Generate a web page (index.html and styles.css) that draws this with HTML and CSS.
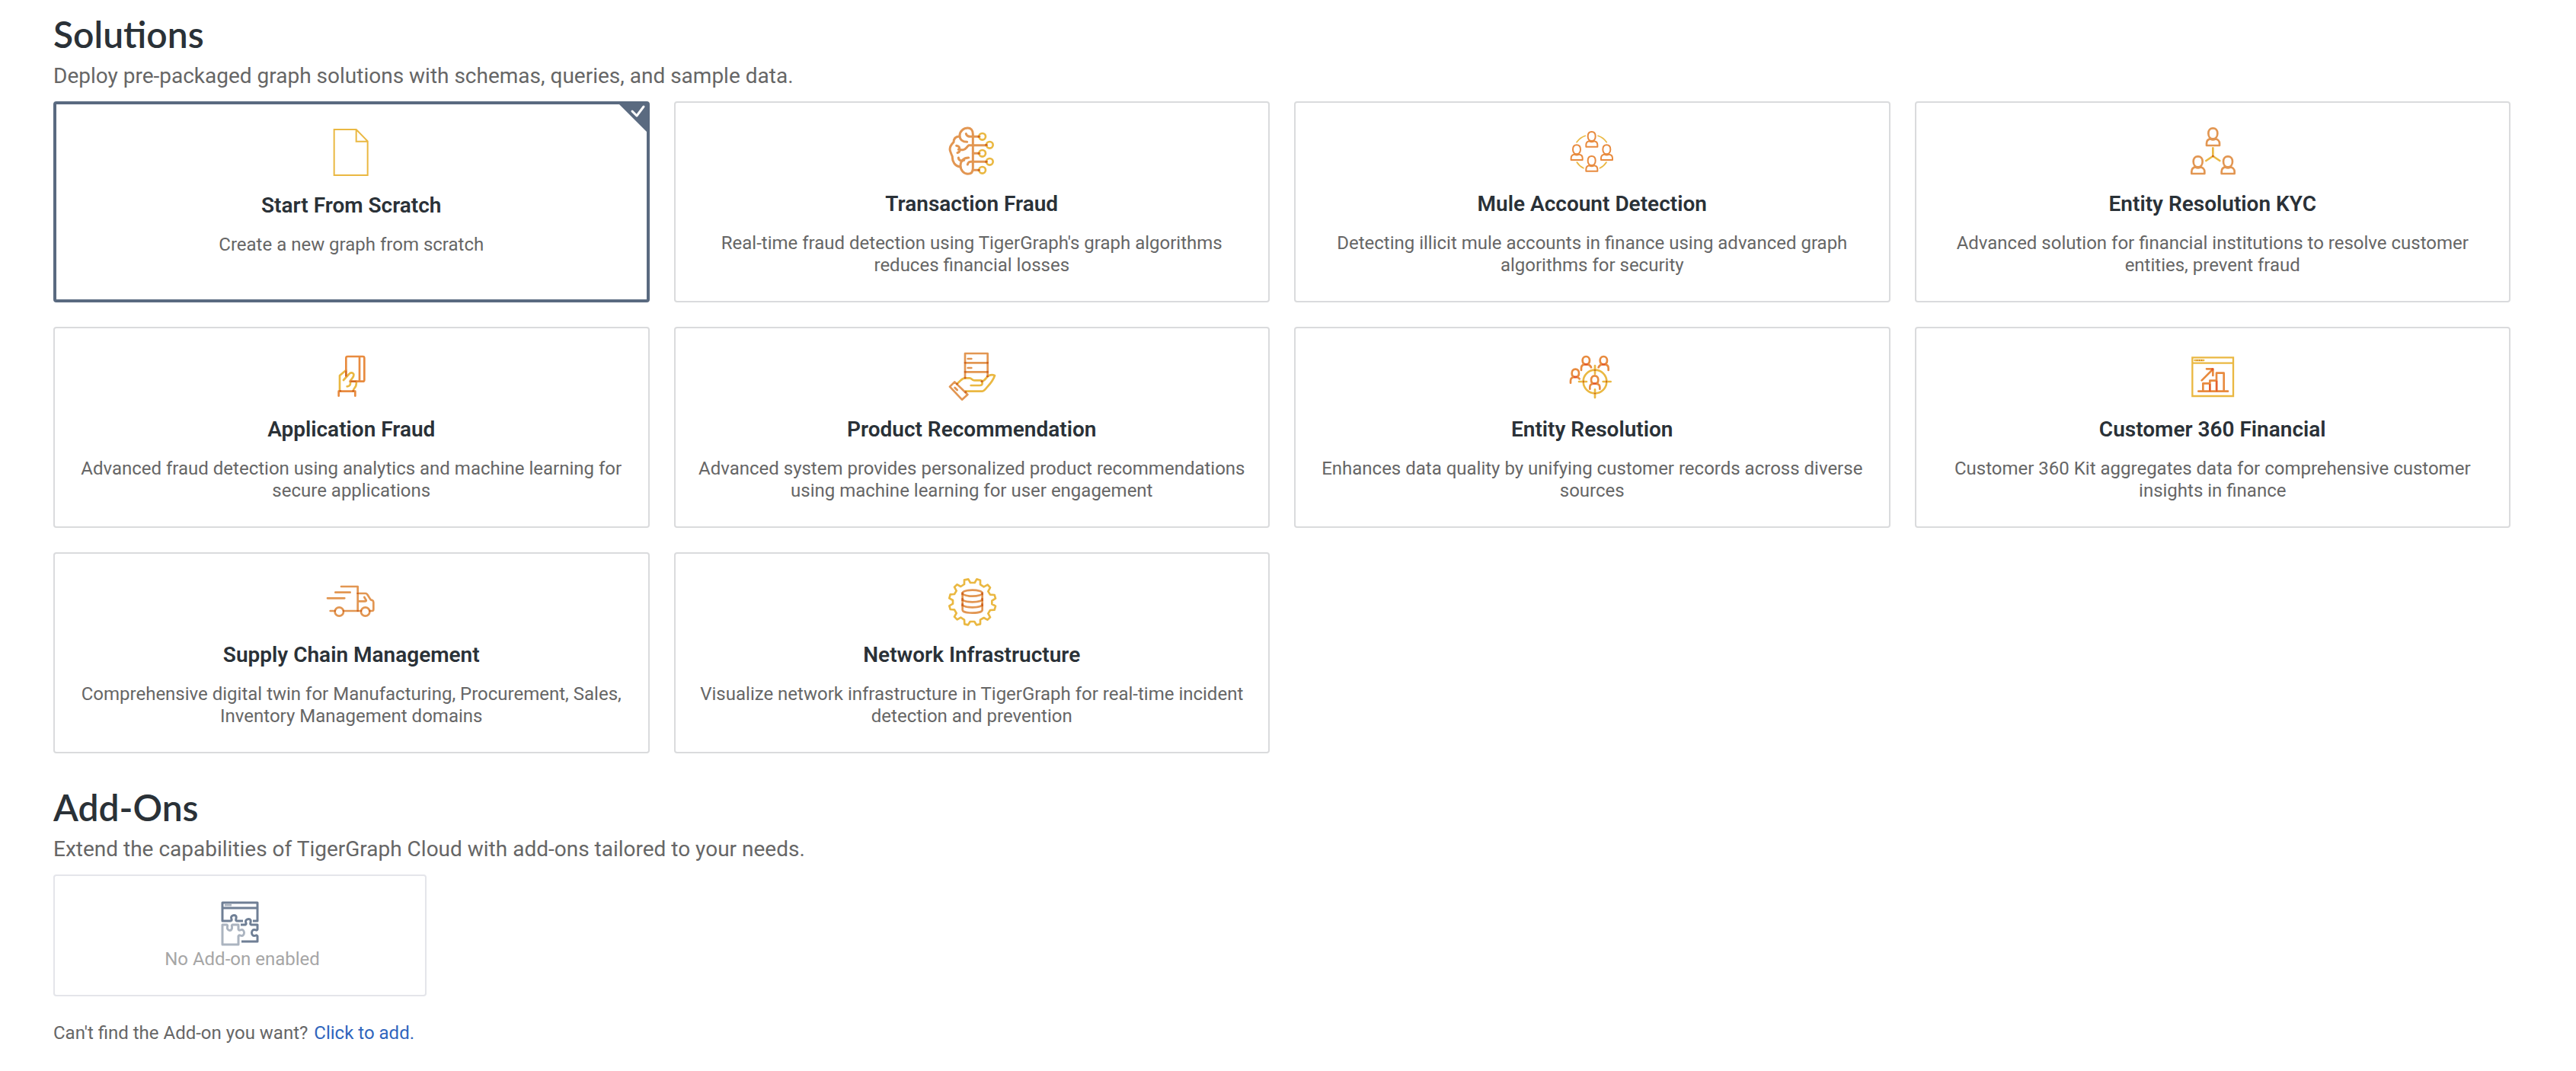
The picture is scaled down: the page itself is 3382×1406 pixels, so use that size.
FILE: index.html
```html
<!DOCTYPE html>
<html lang="en">
<head>
<meta charset="utf-8">
<meta name="viewport" content="width=device-width, initial-scale=1">
<title>Solutions and Add-Ons</title>
<link rel="stylesheet" href="styles.css">
</head>
<body>
<main class="page">
  <section class="section">
    <h1 class="heading">Solutions</h1>
    <p class="lead">Deploy pre-packaged graph solutions with schemas, queries, and sample data.</p>
    <div class="solutions">
      <button type="button" class="card card-selected" aria-pressed="true">
        <svg class="icon" viewBox="88 87 192 192" aria-hidden="true"><path class="y miter" stroke-width="6" d="M117 90h87l45 46v134H117zM204 92v45h44"/></svg>
        <span class="card-title">Start From Scratch</span>
        <span class="card-text">Create a new graph from scratch</span>
        <svg class="corner" viewBox="0 0 36 36" aria-hidden="true"><path class="corner-fill" d="M0 0h36v36z"/><path class="corner-check" d="M17 9l6 6 9-12"/></svg>
      </button>
      <button type="button" class="card" aria-pressed="false">
        <svg class="icon" viewBox="71 51 192 192" aria-hidden="true">
          <g class="o" stroke-width="9"><path d="M171 130V78c0-16-9-24-20-24-17 0-32 13-32 30 0 16 11 25 29 25M118 87c-15 1-23 10-23 23-12 12-18 24-13 36 3 8 3 10 8 20-1 22 11 39 31 42M154 171c-20 0-32 14-32 31 0 20 14 33 29 33 13 0 20-9 20-23v-79"/><path d="M144 77c3 8 9 11 17 11h36M226 122h-71c-12 10-12 18-23 18-8 0-12-1-18-1 6-4 6-12-8-15M120 139c0 7-3 11-10 13M171 154h26M226 187h-63c-7 0-12 4-13 11M176 220h20M114 171c1 11 11 14 22 10"/></g>
          <g class="y" stroke-width="8"><circle cx="208" cy="88" r="13"/><circle cx="237" cy="121" r="13"/><circle cx="208" cy="154" r="13"/><circle cx="237" cy="187" r="13"/><circle cx="208" cy="220" r="13"/></g>
          <path class="r" stroke-width="8" d="M190 88h8M219 121h8M190 154h8M219 187h8M190 220h8"/>
        </svg>
        <span class="card-title">Transaction Fraud</span>
        <span class="card-text">Real-time fraud detection using TigerGraph's graph algorithms reduces financial losses</span>
      </button>
      <button type="button" class="card" aria-pressed="false">
        <svg class="icon" viewBox="85 51 192 192" aria-hidden="true">
          <g class="o2" stroke-width="6">
            <path id="member" d="M180 69c-9 0-15 7-15 18 0 10 6 18 15 18s15-8 15-18c0-11-6-18-15-18zM158 128v-7c0-9 6-14 12-15 6 3 14 3 20 0 7 1 13 6 13 15v7z"/>
            <use href="#member" x="-59" y="52"/><use href="#member" x="59" y="52"/><use href="#member" y="96"/>
          </g>
          <path class="y" stroke-width="5" d="M121 110q13-18 34-25M205 85q21 7 34 25M122 189q9 15 26 23M238 189q-9 15-26 23"/>
        </svg>
        <span class="card-title">Mule Account Detection</span>
        <span class="card-text">Detecting illicit mule accounts in finance using advanced graph algorithms for security</span>
      </button>
      <button type="button" class="card" aria-pressed="false">
        <svg class="icon" viewBox="68 51 192 192" aria-hidden="true">
          <g class="o" stroke-width="8">
            <path id="person" d="M165 55c-11 0-18 8-18 20 0 13 7 22 18 22s18-9 18-22c0-12-7-20-18-20zM140 123v-8c0-11 7-17 15-18 6 4 14 4 20 0 8 1 16 7 16 18v8z"/>
            <use href="#person" x="-59" y="111"/><use href="#person" x="59" y="111"/>
          </g>
          <path class="y" stroke-width="8" d="M165 133v32l-27 18M165 165l27 18"/><circle class="dot" cx="165" cy="165" r="4"/>
        </svg>
        <span class="card-title">Entity Resolution KYC</span>
        <span class="card-text">Advanced solution for financial institutions to resolve customer entities, prevent fraud</span>
      </button>
      <button type="button" class="card" aria-pressed="false">
        <svg class="icon" viewBox="58 39 192 192" aria-hidden="true">
          <path class="y" stroke-width="8" d="M134 108l-25 21v60M124 147l22-24c5-6 13-7 17-1 4 7-1 13-5 18-6 9-9 8-7 15 1 10-3 17-13 17M174 152c2 13-1 21-7 27-4 4-4 5-4 10"/>
          <path class="o2" stroke-width="8" d="M134 132V60c0-4 3-6 6-6h60c4 0 6 2 6 6v86c0 4-2 6-6 6h-50M187 54v98M105 209v-18h65v18"/>
          <path class="r" stroke-width="6" d="M134 110v22M152 152h22M107 190h8M158 190h8"/>
        </svg>
        <span class="card-title">Application Fraud</span>
        <span class="card-text">Advanced fraud detection using analytics and machine learning for secure applications</span>
      </button>
      <button type="button" class="card" aria-pressed="false">
        <svg class="icon" viewBox="71 39 192 192" aria-hidden="true">
          <path class="y" stroke-width="8" d="M108 162l16-15c7-8 12-8 20-8h14c8 0 9 9 19 9h24c5 0 7 3 7 7v4c0 6-4 9-10 9h-35M205 153c12-3 17-12 23-20 8-6 20-8 29-4-7 22-21 36-33 49-7 8-11 13-17 13h-66"/>
          <path class="o" stroke-width="8" d="M140 138V42h89v90M140 79h89M140 115h89M151 63h14M151 99h14M80 173l19-19 51 50-22 20zM100 177l9 9"/>
          <path class="r" stroke-width="8" stroke-linecap="round" d="M140 79h1M228 79h1M140 115h1M228 115h1M140 138h1M228 132h1M206 152h1M108 162h1M142 194h1"/>
        </svg>
        <span class="card-title">Product Recommendation</span>
        <span class="card-text">Advanced system provides personalized product recommendations using machine learning for user engagement</span>
      </button>
      <button type="button" class="card" aria-pressed="false">
        <svg class="icon" viewBox="55 39 192 192" aria-hidden="true">
          <g class="y" stroke-width="8"><circle cx="163" cy="153" r="46"/><path d="M163 90v32M163 184v32M100 153h30M195 153h30"/></g>
          <g class="o2" stroke-width="8">
            <path id="head" d="M128 54c-9 0-14 7-14 16s5 15 14 15 14-6 14-15-5-16-14-16z"/>
            <use href="#head" x="69"/><use href="#head" x="-42" y="50"/><use href="#head" x="34" y="76"/>
            <path d="M109 108v-8c0-10 6-14 13-15h12c5 1 11 4 14 12M216 108v-8c0-10-6-14-13-15h-12c-5 1-11 4-14 12M67 158v-8c0-10 6-14 13-15h12c4 1 8 3 10 7M143 182v-7c0-9 6-13 13-14h12c7 1 14 5 14 14v7"/>
          </g>
          <path class="hot" stroke-width="7" d="M121 85h14M190 85h14M79 135h14M155 161h14"/>
          <path class="r" stroke-width="7" d="M115 153h5M206 153h5M163 105v5M163 197v5"/>
        </svg>
        <span class="card-title">Entity Resolution</span>
        <span class="card-text">Enhances data quality by unifying customer records across diverse sources</span>
      </button>
      <button type="button" class="card" aria-pressed="false">
        <svg class="icon" viewBox="68 39 192 192" aria-hidden="true">
          <path class="y miter" stroke-width="7" d="M84 58h161v152H84zM84 80h161M93 69h36"/>
          <path class="r" stroke-width="5" d="M101 69h3M110 69h3M119 69h3"/>
          <path class="o2" stroke-width="8" d="M108 191h116M126 191v-31h27v31M153 160v-11h26v42M179 149v-30h29v72M121 148l43-43M140 103h25v26"/>
          <path class="hot" stroke-width="6" d="M153 162v29M180 149v42"/><circle class="hot-dot" cx="163" cy="105" r="5"/>
        </svg>
        <span class="card-title">Customer 360 Financial</span>
        <span class="card-text">Customer 360 Kit aggregates data for comprehensive customer insights in finance</span>
      </button>
      <button type="button" class="card" aria-pressed="false">
        <svg class="icon" viewBox="58 27 192 192" aria-hidden="true">
          <g class="o" stroke-width="8"><path d="M115 60h65v96M92 83h58M61 106h67M72 156h17M125 156h67M180 87h31c4 0 5 2 8 6l10 16c2 4 4 4 8 5 4 2 5 4 5 8v28c0 4-3 6-6 6h-8M206 102l7 12c1 3 0 4-3 4h-25"/><circle cx="107" cy="159" r="17"/><circle cx="210" cy="159" r="17"/></g>
          <path class="r" stroke-width="7" d="M180 84v6M180 153v6M88 156h5M121 156h5M191 156h5M225 156h5"/>
        </svg>
        <span class="card-title">Supply Chain Management</span>
        <span class="card-text">Comprehensive digital twin for Manufacturing, Procurement, Sales, Inventory Management domains</span>
      </button>
      <button type="button" class="card" aria-pressed="false">
        <svg class="icon" viewBox="71 57 192 192" aria-hidden="true">
          <path class="y" stroke-width="8" d="M153 61l8 14h17l8-14 14 4v17l14 9 15-8 10 11-8 15 8 13 17 1 4 14-14 9v13l14 8-4 15-17 1-8 13 8 15-11 10-14-8-14 8v17l-15 3-8-13h-17l-8 13-14-3-1-17-14-9-14 8-11-11 8-14-8-14-16-1-4-14 14-8v-14l-14-8 4-15 16-1 8-13-8-15 11-10 14 8 14-9v-17z"/>
          <g class="o" stroke-width="8"><ellipse cx="169" cy="116" rx="39" ry="12"/><path d="M130 116v66c0 7 17 12 39 12s39-5 39-12v-66M130 139c0 8 17 12 39 12s39-4 39-12M130 160c0 8 17 12 39 12s39-4 39-12"/></g>
          <path class="r" stroke-width="8" d="M130 113v11M208 113v11M130 136v11M208 136v11M130 157v11M208 157v11"/>
        </svg>
        <span class="card-title">Network Infrastructure</span>
        <span class="card-text">Visualize network infrastructure in TigerGraph for real-time incident detection and prevention</span>
      </button>
    </div>
  </section>
  <section class="section">
    <h1 class="heading">Add-Ons</h1>
    <p class="lead">Extend the capabilities of TigerGraph Cloud with add-ons tailored to your needs.</p>
    <div class="empty">
      <svg class="icon" viewBox="0 0 64 64" aria-hidden="true">
        <path class="slate" d="M20 28H9V4h46v24h-6M9 11h46M20 28c3-1-1-4 1-6 2-2 5-2 6 0 1 3-2 5 1 6h8M33 33h6c3-1-1-4 1-6 2-2 5-2 6 0 1 3-2 5 1 6h8v6c-1 3-3-1-6 1-2 2-2 5 0 7 3 2 5-2 6 1v7H34"/>
        <path class="slate-light" d="M9 33h6c2 1-1 4 1 6 2 2 4 2 5 0 2-2-1-5 1-6h8v6c1 3 4-1 6 1 2 2 2 5 0 7-2 2-5-2-6 1v11H9zM12 7h9"/>
      </svg>
      <p class="empty-text">&nbsp;No Add-on enabled</p>
    </div>
    <p class="hint">Can't find the Add-on you want? <a class="link" href="#add">Click to add.</a></p>
  </section>
</main>
</body>
</html>
```
FILE: styles.css
```css
* {
  box-sizing: border-box;
}

body {
  margin: 0;
  background: #fff;
  color: #666;
  font-family: Roboto, "Liberation Sans", sans-serif;
  font-size: 24px;
  line-height: 29px;
}

.page {
  display: flex;
  flex-direction: column;
  gap: 43px;
  padding: 17px 86px 32px 70px;
}

.heading {
  margin: 0 0 6px;
  color: #2a3137;
  font-family: Lato, "Open Sans", sans-serif;
  font-size: 48px;
  font-weight: 600;
  line-height: 56px;
}

.lead {
  margin: 0 0 12px;
  font-size: 28px;
  line-height: 42px;
}

.solutions {
  display: grid;
  grid-template-columns: repeat(4, minmax(0, 1fr));
  gap: 32px;
}

.card {
  position: relative;
  display: flex;
  flex-direction: column;
  align-items: center;
  gap: 16px;
  padding: 32px 28px;
  border: 2px solid #dadbdd;
  border-radius: 4px;
  background: #fff;
  color: inherit;
  font: inherit;
  text-align: center;
  cursor: pointer;
}

.card-selected {
  border: 4px solid #5a6a80;
}

.card-title {
  color: #2a3137;
  font-size: 28px;
  font-weight: 600;
  line-height: 42px;
}

.icon {
  flex: none;
  width: 64px;
  height: 64px;
  overflow: visible;
  fill: none;
  stroke-linejoin: round;
}

.corner {
  position: absolute;
  top: 0;
  right: 0;
  width: 36px;
  height: 36px;
}

.corner-fill {
  fill: #5a6a80;
}

.corner-check {
  fill: none;
  stroke: #fff;
  stroke-width: 3;
  stroke-linecap: round;
  stroke-linejoin: round;
}

.y {
  stroke: #eab842;
  stroke-linecap: round;
}

.miter {
  stroke-linejoin: miter;
}

.o {
  stroke: #e29652;
  stroke-linecap: round;
}

.o2 {
  stroke: #e88b3f;
  stroke-linecap: round;
}

.r {
  stroke: #cf6420;
}

.dot {
  fill: #cf6420;
}

.hot {
  stroke: #e4572e;
}

.hot-dot {
  fill: #e4572e;
}

.slate {
  stroke: #6f7f95;
  stroke-width: 3;
}

.slate-light {
  stroke: #abb4c0;
  stroke-width: 3;
}

.empty {
  display: flex;
  flex-direction: column;
  align-items: center;
  justify-content: center;
  width: 490px;
  max-width: 100%;
  min-height: 160px;
  margin-bottom: 34px;
  padding-bottom: 2px;
  border: 2px solid #e4e5ea;
  border-radius: 4px;
}

.empty-text,
.hint {
  margin: 0;
}

.empty-text {
  color: #a6a6a6;
}

.link {
  margin-left: 2px;
  color: #2f65bd;
  text-decoration: none;
}
```
